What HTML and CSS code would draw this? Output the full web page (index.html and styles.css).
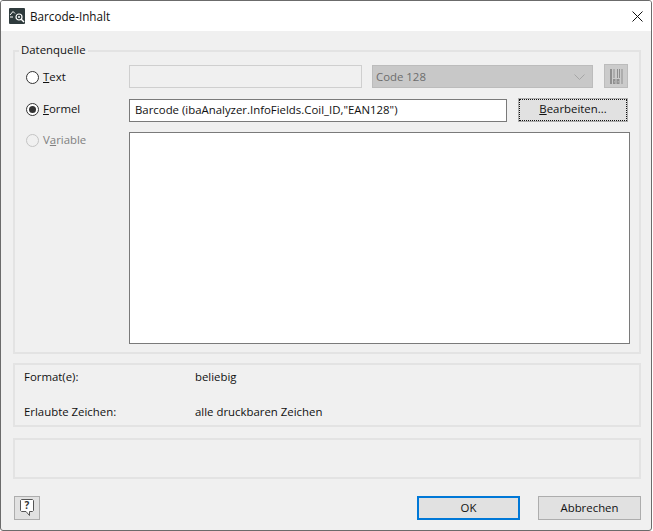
FILE: index.html
```html
<!DOCTYPE html>
<html lang="de">
<head>
<meta charset="utf-8">
<title>Barcode-Inhalt</title>
<link rel="stylesheet" href="styles.css">
</head>
<body>
<div class="window">
  <header class="titlebar">
    <svg class="app-icon" width="16" height="16" viewBox="0 0 16 16">
      <rect width="16" height="16" rx="1" fill="#2f3b3d"/>
      <path d="M1 7 L4 3.5 L6 5.5" fill="none" stroke="#fff" stroke-width="1"/>
      <path d="M1 9 H4" fill="none" stroke="#fff" stroke-width="1"/>
      <circle cx="10" cy="9" r="3" fill="none" stroke="#fff" stroke-width="1.2"/>
      <circle cx="10" cy="9" r="1" fill="#fff"/>
      <path d="M12 11 L15 14" stroke="#fff" stroke-width="1.4"/>
    </svg>
    <span class="title">Barcode-Inhalt</span>
    <svg class="close" width="11" height="11" viewBox="0 0 11 11">
      <path d="M.5 .5 L10.5 10.5 M10.5 .5 L.5 10.5" stroke="#111" stroke-width="1" fill="none"/>
    </svg>
  </header>
  <main class="content">
    <section class="group source">
      <h2 class="legend">Datenquelle</h2>
      <div class="source-grid">
        <label class="radio radio-text"><span class="dot"></span><span><u>T</u>ext</span></label>
        <div class="field field-disabled"></div>
        <div class="select">Code 128
          <svg width="11" height="6" viewBox="0 0 11 6"><path d="M.5 .5 L5.5 5.5 L10.5 .5" stroke="#a6a6a6" fill="none"/></svg>
        </div>
        <button class="icon-btn" type="button">
          <svg width="14" height="15" viewBox="0 0 14 15">
            <path d="M1 0H3V15H1Z M4.500 0H5.500V9H4.500Z M8 0H9V9H8Z M10 0H11V9H10Z M12.500 0H13.500V15H12.500Z M4 10H6.500V15H4Z M7.500 10H10.500V15H7.500Z" fill="#8f8f8f"/>
            <path d="M5 12H5.500V13.500H5Z M8.800 12H9.500V13.500H8.800Z" fill="#c8c8c8"/>
          </svg>
        </button>

        <label class="radio radio-formula"><span class="dot checked"></span><span><u>F</u>ormel</span></label>
        <div class="field field-wide">Barcode (ibaAnalyzer.InfoFields.Coil_ID,"EAN128")</div>
        <button class="btn edit" type="button"><span class="focus"><u>B</u>earbeiten...</span></button>

        <label class="radio disabled"><span class="dot"></span><span>V<u>a</u>riable</span></label>
        <div class="area"></div>
      </div>
    </section>
    <section class="group info">
      <span>Format(e):</span><span>beliebig</span>
      <span>Erlaubte Zeichen:</span><span>alle druckbaren Zeichen</span>
    </section>
    <section class="group empty"></section>
    <footer class="actions">
      <button class="help" type="button">
        <svg width="16" height="19" viewBox="0 0 16 19">
          <path d="M2.500 1.500H13.500L14.500 2.500V12.500L13.500 13.500H10.500V17.500L7 13.500H2.500L1.500 12.500V2.500Z" fill="#fff" stroke="#555"/>
          <text x="8" y="11" text-anchor="middle" class="help-mark">?</text>
        </svg>
      </button>
      <div class="spacer"></div>
      <button class="btn ok" type="button">OK</button>
      <button class="btn cancel" type="button">Abbrechen</button>
    </footer>
  </main>
</div>
</body>
</html>
```
FILE: styles.css
```css
* { box-sizing: border-box; }
html, body { margin: 0; padding: 0; background: #fff; }
body { width: 653px; height: 531px; font: 11.4px/16px "Open Sans", "Noto Sans", sans-serif; color: #111; overflow: hidden; }
.window { width: 652px; height: 531px; border: 1px solid #6b6b6b; border-radius: 3px; background: #f0f0f0; display: flex; flex-direction: column; overflow: hidden; }
.titlebar { height: 30px; flex: none; background: #fff; display: flex; align-items: center; padding: 0 8px 0 8px; }
.app-icon { flex: none; margin-right: 5px; }
.title { flex: 1; font-size: 11.7px; }
.content { flex: 1; padding: 19px 10px 0 12px; display: flex; flex-direction: column; }
.group { border: 2px solid #e3e3e3; width: 628px; }
.source { height: 304px; position: relative; padding: 12px 8px 0 11px; }
.legend { position: absolute; left: 4px; top: -10px; margin: 0; padding: 0 2px; background: #f0f0f0; font: inherit; }
.source-grid { display: grid; grid-template-columns: 103px 233px 10px 221px 11px 24px 2px; grid-template-rows: 24px 10px 24px 10px 212px; align-items: center; }
.radio { display: flex; align-items: center; gap: 4px; height: 24px; align-self: start; }
.radio-text { grid-area: 1 / 1; margin-top: 1px; }
.radio-formula { grid-area: 3 / 1; margin-top: -1px; }
.radio.disabled { grid-area: 5 / 1; color: #808080; margin-top: -4px; }
.dot { width: 13px; height: 13px; border: 1.500px solid #333; border-radius: 50%; background: #fff; flex: none; position: relative; }
.dot.checked::after { content: ""; position: absolute; inset: 2px; border-radius: 50%; background: #333; }
.disabled .dot { border-color: #c4c4c4; background: #f0f0f0; }
.field { height: 24px; border: 1px solid #7a7a7a; background: #fff; padding: 2px 5px; white-space: nowrap; }
.field-disabled { grid-area: 1 / 2; height: 23px; background: #f0f0f0; border-color: #cfcfcf; border-width: 1px; }
.select { grid-area: 1 / 4; height: 23px; background: #c8c8c8; border: 1px solid #bcbcbc; color: #6d6d6d; padding: 2px 3px 0; display: flex; justify-content: space-between; align-items: center; }
.select svg { margin-right: 4px; }
.icon-btn { grid-area: 1 / 6; width: 24px; height: 24px; border: 1px solid #bcbcbc; background: #cbcbcb; padding: 0; display: flex; align-items: center; justify-content: center; }
.field-wide { grid-area: 3 / 2 / 3 / 5; width: 378px; height: 23px; }
.edit { grid-area: 3 / 6 / 3 / 6; justify-self: end; width: 110px; height: 24px; padding: 1px; border-color: #a0a0a0; }
.focus { display: block; height: 100%; border: 1px dotted #111; line-height: 18px; }
.area { grid-area: 5 / 2 / 5 / 8; height: 212px; border: 1px solid #7a7a7a; background: #fff; width: 501px; }
.btn { font: inherit; color: #111; background: #e1e1e1; border: 1px solid #adadad; padding: 0; text-align: center; }
.info { margin-top: 9px; height: 64px; padding: 3px 9px; display: grid; grid-template-columns: 171px 1fr; grid-template-rows: 18px 18px; row-gap: 17px; align-items: center; }
.empty { margin-top: 11px; height: 41px; }
.actions { display: flex; align-items: center; margin-top: 16px; height: 25px; width: 628px; }
.help { width: 26px; height: 24px; margin-left: 1px; border: 1px solid #adadad; background: #e1e1e1; padding: 0; display: flex; align-items: center; justify-content: center; }
.help-mark { font: bold 10px "Open Sans", sans-serif; fill: #333; }
.spacer { flex: 1; }
.ok { width: 103px; height: 24px; border: 2px solid #0078d7; }
.cancel { width: 103px; height: 24px; margin-left: 18px; }
```
